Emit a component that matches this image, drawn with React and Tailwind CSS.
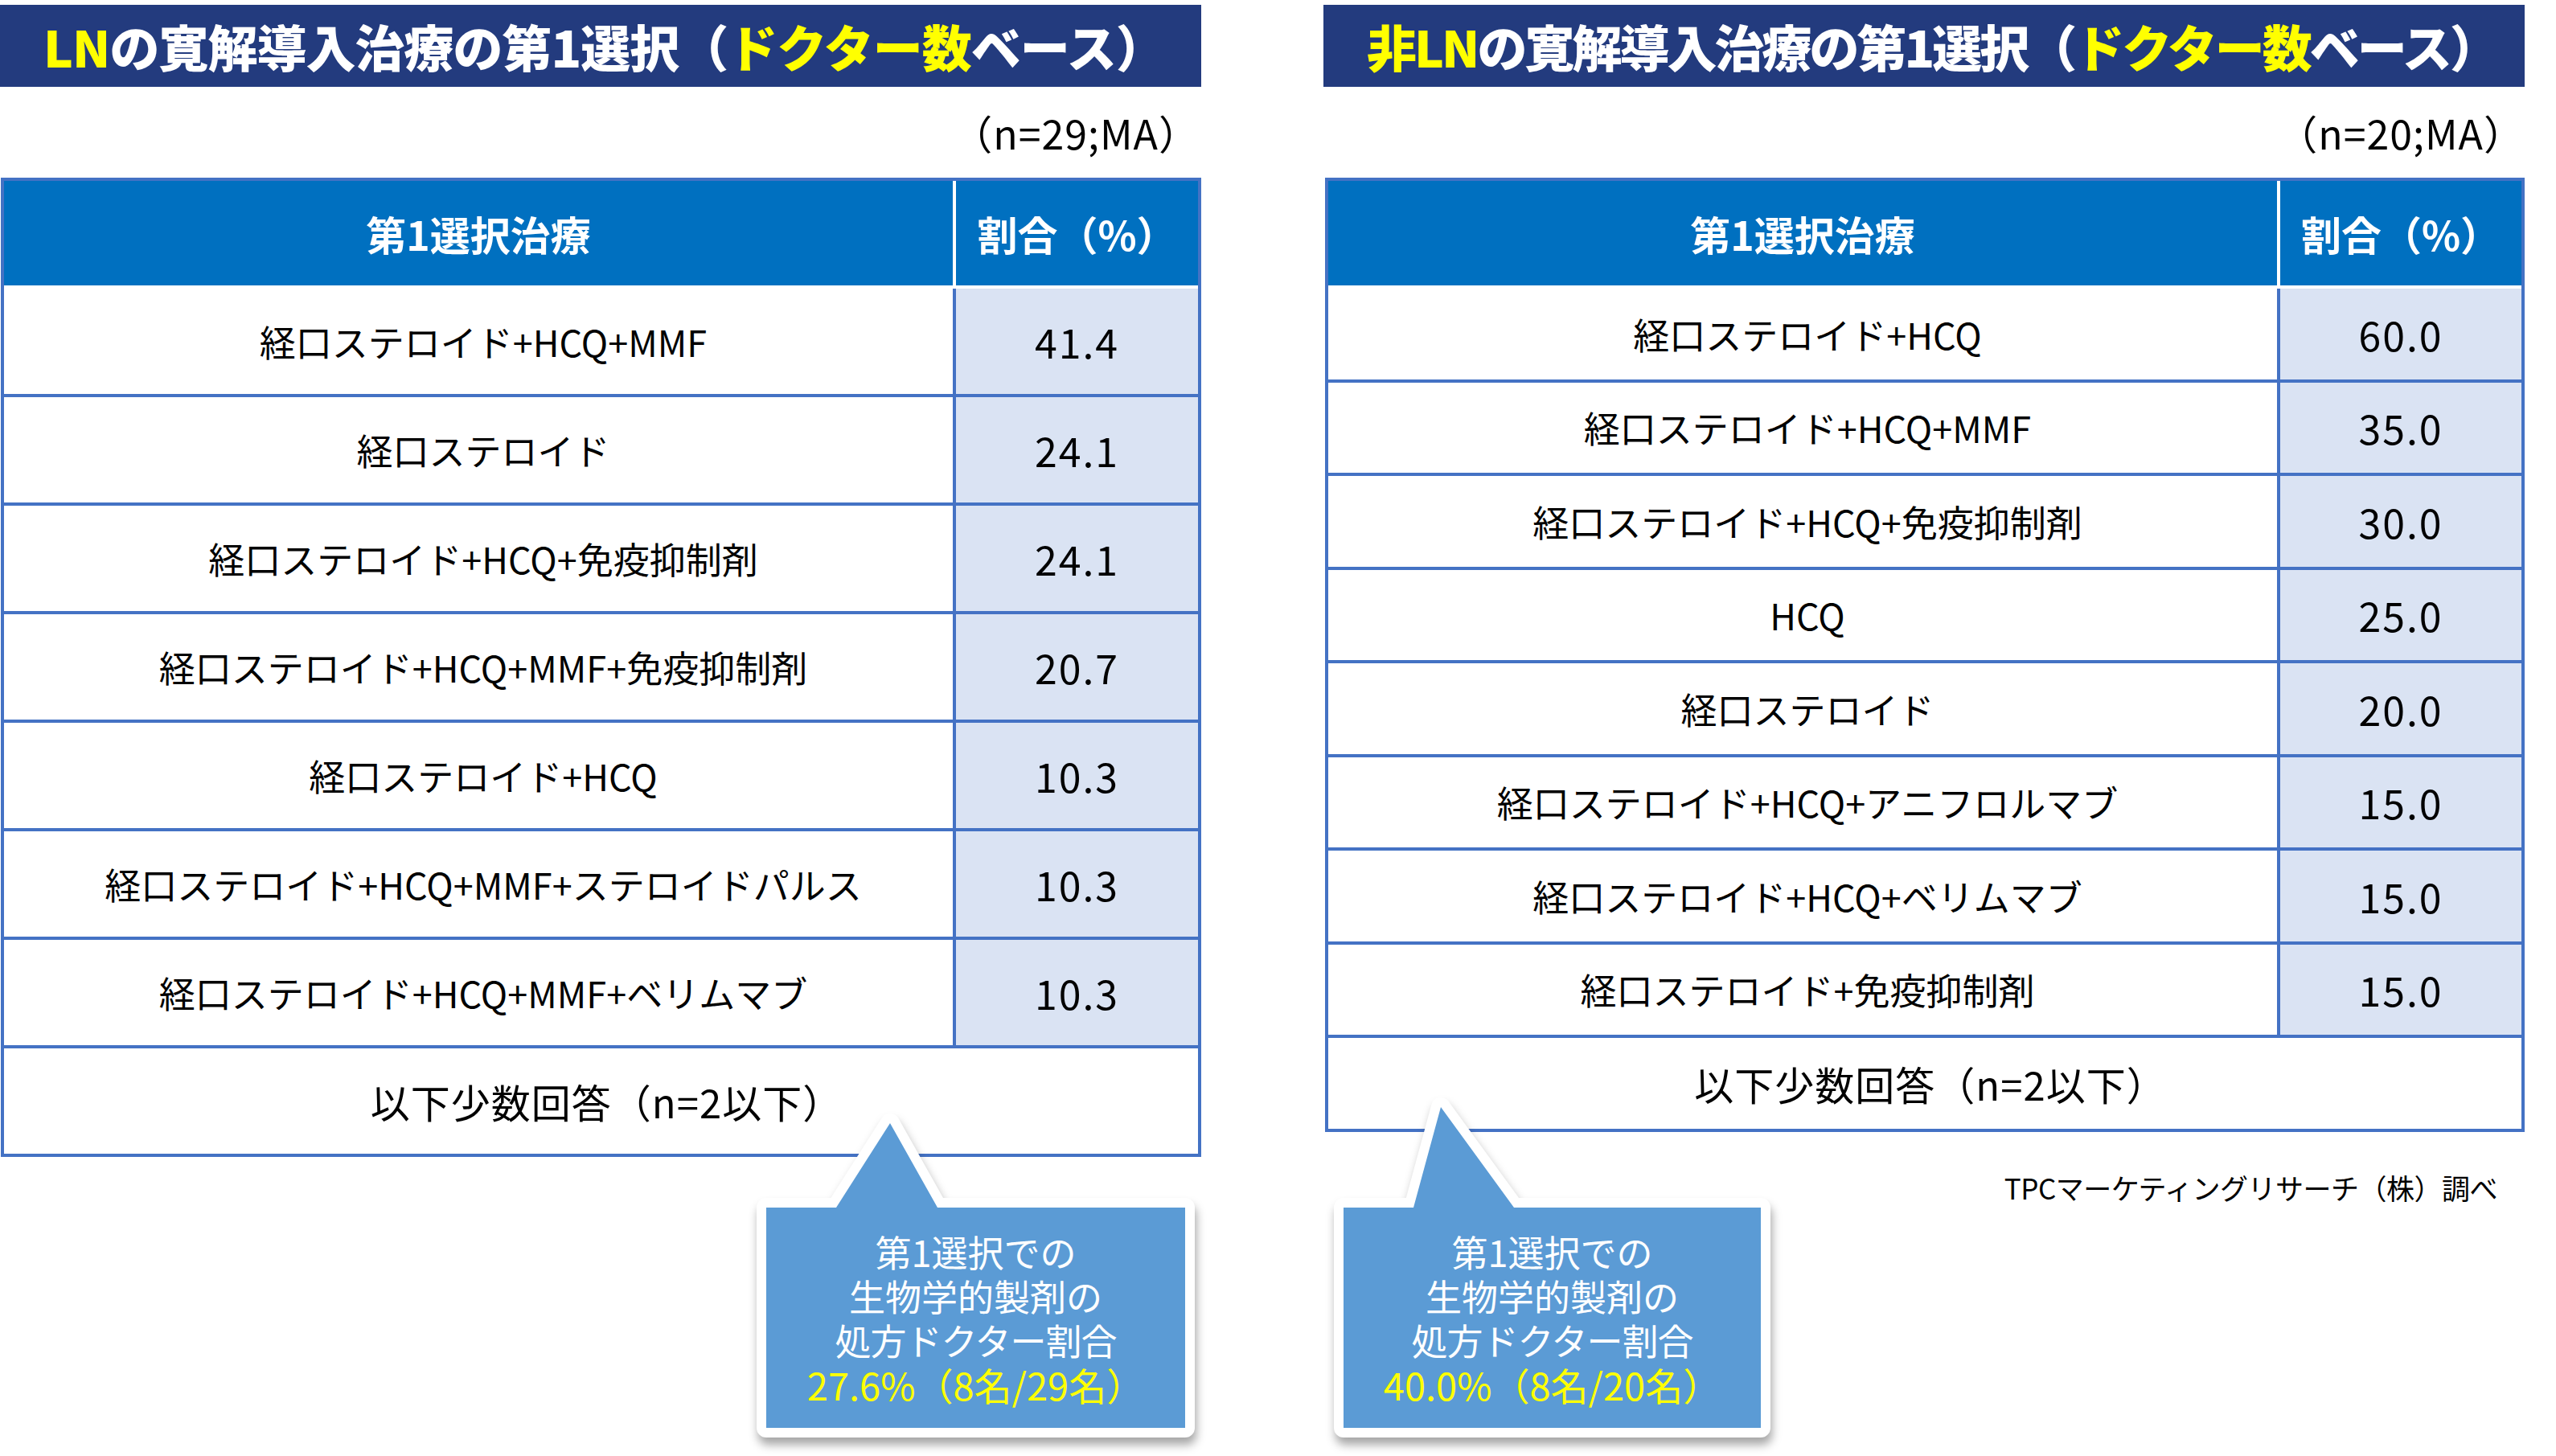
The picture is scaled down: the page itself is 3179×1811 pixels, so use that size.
import React from "react";

const leftRows = [
  ["経口ステロイド+HCQ+MMF", "41.4"],
  ["経口ステロイド", "24.1"],
  ["経口ステロイド+HCQ+免疫抑制剤", "24.1"],
  ["経口ステロイド+HCQ+MMF+免疫抑制剤", "20.7"],
  ["経口ステロイド+HCQ", "10.3"],
  ["経口ステロイド+HCQ+MMF+ステロイドパルス", "10.3"],
  ["経口ステロイド+HCQ+MMF+ベリムマブ", "10.3"],
];

const rightRows = [
  ["経口ステロイド+HCQ", "60.0"],
  ["経口ステロイド+HCQ+MMF", "35.0"],
  ["経口ステロイド+HCQ+免疫抑制剤", "30.0"],
  ["HCQ", "25.0"],
  ["経口ステロイド", "20.0"],
  ["経口ステロイド+HCQ+アニフロルマブ", "15.0"],
  ["経口ステロイド+HCQ+ベリムマブ", "15.0"],
  ["経口ステロイド+免疫抑制剤", "15.0"],
];

function Table({ rows, rowClass }) {
  return (
    <div className="border-[4px] border-[#4472c4] w-full">
      <div className="flex h-[130px] bg-[#0070c0] text-white font-bold text-[50px]">
        <div className="w-[1180px] flex items-center justify-center">第1選択治療</div>
        <div className="w-[4px] bg-white" />
        <div className="flex-1 flex items-center justify-center">割合（%）</div>
      </div>
      {rows.map((r, i) => (
        <div
          key={i}
          className={`flex border-t-[4px] ${i === 0 ? "border-white" : "border-[#4472c4]"} ${rowClass}`}
        >
          <div className="w-[1180px] flex items-center justify-center text-[45px] text-black pl-[12px]">{r[0]}</div>
          <div className="w-[4px] bg-[#4472c4]" />
          <div className="flex-1 flex items-center justify-center bg-[#dae3f3] text-[50px] tracking-[2px] text-black">
            {r[1]}
          </div>
        </div>
      ))}
      <div className={`flex items-center justify-center border-t-[4px] border-[#4472c4] text-[49px] tracking-[1px] text-black pl-[14px] ${rowClass}`}>
        以下少数回答（n=2以下）
      </div>
    </div>
  );
}

function Title({ children, trackClass }) {
  return (
    <div className={`mt-[6px] h-[102px] bg-[#233b7e] flex items-center pl-[54px] text-white font-black text-[62px] leading-none ${trackClass}`}>
      {children}
    </div>
  );
}

export default function App() {
  return (
    <div className="relative w-[3179px] h-[1811px] bg-white overflow-hidden font-['Noto_Sans_CJK_JP','Noto_Sans',sans-serif]">
      <div className="flex">
        {/* Left panel */}
        <div className="w-[1494px] flex flex-col">
          <Title trackClass="tracking-[-1px]">
            <span className="text-[#ffff00]">LN</span>の寛解導入治療の第1選択（<span className="text-[#ffff00]">ドクター数</span>ベース）
          </Title>
          <div className="h-[113px] flex items-center justify-end pr-[2px] text-[50px] tracking-[1px] text-black">（n=29;MA）</div>
          <div className="pl-[1px]">
            <Table rows={leftRows} rowClass="h-[135px]" />
          </div>
        </div>
        {/* Right panel */}
        <div className="w-[1494px] ml-[152px] flex flex-col">
          <Title trackClass="tracking-[-3px]">
            <span className="text-[#ffff00]">非LN</span>の寛解導入治療の第1選択（<span className="text-[#ffff00]">ドクター数</span>ベース）
          </Title>
          <div className="h-[113px] flex items-center justify-end pr-0 text-[50px] tracking-[1px] text-black">（n=20;MA）</div>
          <div className="pl-[2px]">
            <Table rows={rightRows} rowClass="h-[116.5px]" />
          </div>
          <div className="mt-[48px] flex justify-end pr-[34px] text-[35px] leading-[42px] text-black tracking-[-0.5px]">
            TPCマーケティングリサーチ（株）調べ
          </div>
        </div>
      </div>

      {/* Left callout */}
      <svg
        className="absolute left-[920px] top-[1370px] drop-shadow-[2px_9px_6px_rgba(0,0,0,0.35)]"
        width="590"
        height="441"
        viewBox="0 0 590 441"
      >
        <path
          d="M33,132 L120,132 L187,27 L246,132 L554,132 L554,406 L33,406 Z"
          fill="#5b9bd5"
          stroke="#ffffff"
          strokeWidth="24"
          strokeLinejoin="round"
          paintOrder="stroke"
        />
      </svg>
      <div className="absolute left-[953px] top-[1502px] w-[521px] h-[274px] flex flex-col items-center justify-center text-[45px] leading-[55px] text-white">
        <div className="h-[55px]">第1選択での</div>
        <div className="h-[55px]">生物学的製剤の</div>
        <div className="h-[55px] tracking-[-1px]">処方ドクター割合</div>
        <div className="h-[55px] text-[#ffff00] text-[47px]">27.6%（8名/29名）</div>
      </div>

      {/* Right callout */}
      <svg
        className="absolute left-[1640px] top-[1350px] drop-shadow-[2px_9px_6px_rgba(0,0,0,0.35)]"
        width="580"
        height="461"
        viewBox="0 0 580 461"
      >
        <path
          d="M31,152 L118,152 L152,27 L243,152 L550,152 L550,426 L31,426 Z"
          fill="#5b9bd5"
          stroke="#ffffff"
          strokeWidth="24"
          strokeLinejoin="round"
          paintOrder="stroke"
        />
      </svg>
      <div className="absolute left-[1671px] top-[1502px] w-[519px] h-[274px] flex flex-col items-center justify-center text-[45px] leading-[55px] text-white">
        <div className="h-[55px]">第1選択での</div>
        <div className="h-[55px]">生物学的製剤の</div>
        <div className="h-[55px] tracking-[-1px]">処方ドクター割合</div>
        <div className="h-[55px] text-[#ffff00] text-[47px]">40.0%（8名/20名）</div>
      </div>
    </div>
  );
}
